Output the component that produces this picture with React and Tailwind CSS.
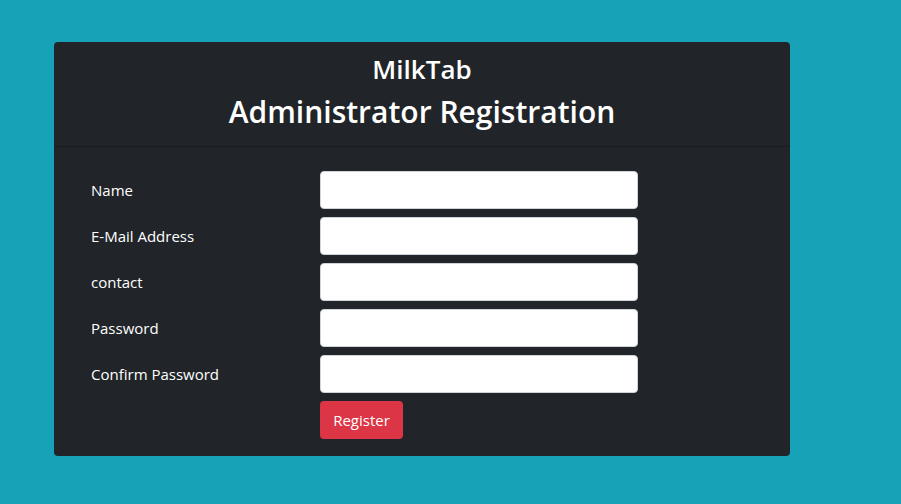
const FIELDS = [
  { label: "Name", type: "text" },
  { label: "E-Mail Address", type: "email" },
  { label: "contact", type: "text" },
  { label: "Password", type: "password" },
  { label: "Confirm Password", type: "password" },
];

export default function App() {
  return (
    <div
      className="h-[504px] w-[901px] bg-[#17a2b8] pl-[54px] pt-[42px]"
      style={{ fontFamily: '"Open Sans", "Noto Sans", sans-serif' }}
    >
      <div className="w-[736px] rounded-[4px] bg-[#212529] text-white">
        <div className="flex h-[105px] flex-col items-center border-b border-black/20 pt-[10px]">
          <h3 className="mb-[7px] text-[26px] font-semibold leading-[34px]">MilkTab</h3>
          <h2 className="text-[30px] font-semibold leading-[38px]">
            Administrator Registration
          </h2>
        </div>

        <form className="flex flex-col gap-[8px] pb-[17px] pl-[37px] pt-[24px]">
          {FIELDS.map((f) => (
            <div key={f.label} className="flex items-center">
              <label className="w-[229px] text-[15px]">{f.label}</label>
              <input
                type={f.type}
                className="h-[38px] w-[318px] rounded-[4px] border border-[#ced4da] bg-white px-3 text-[#495057]"
              />
            </div>
          ))}
          <div className="flex">
            <div className="w-[229px]" />
            <button
              type="button"
              className="h-[38px] w-[83px] rounded-[4px] bg-[#dc3545] text-[15px] text-white"
            >
              Register
            </button>
          </div>
        </form>
      </div>
    </div>
  );
}
